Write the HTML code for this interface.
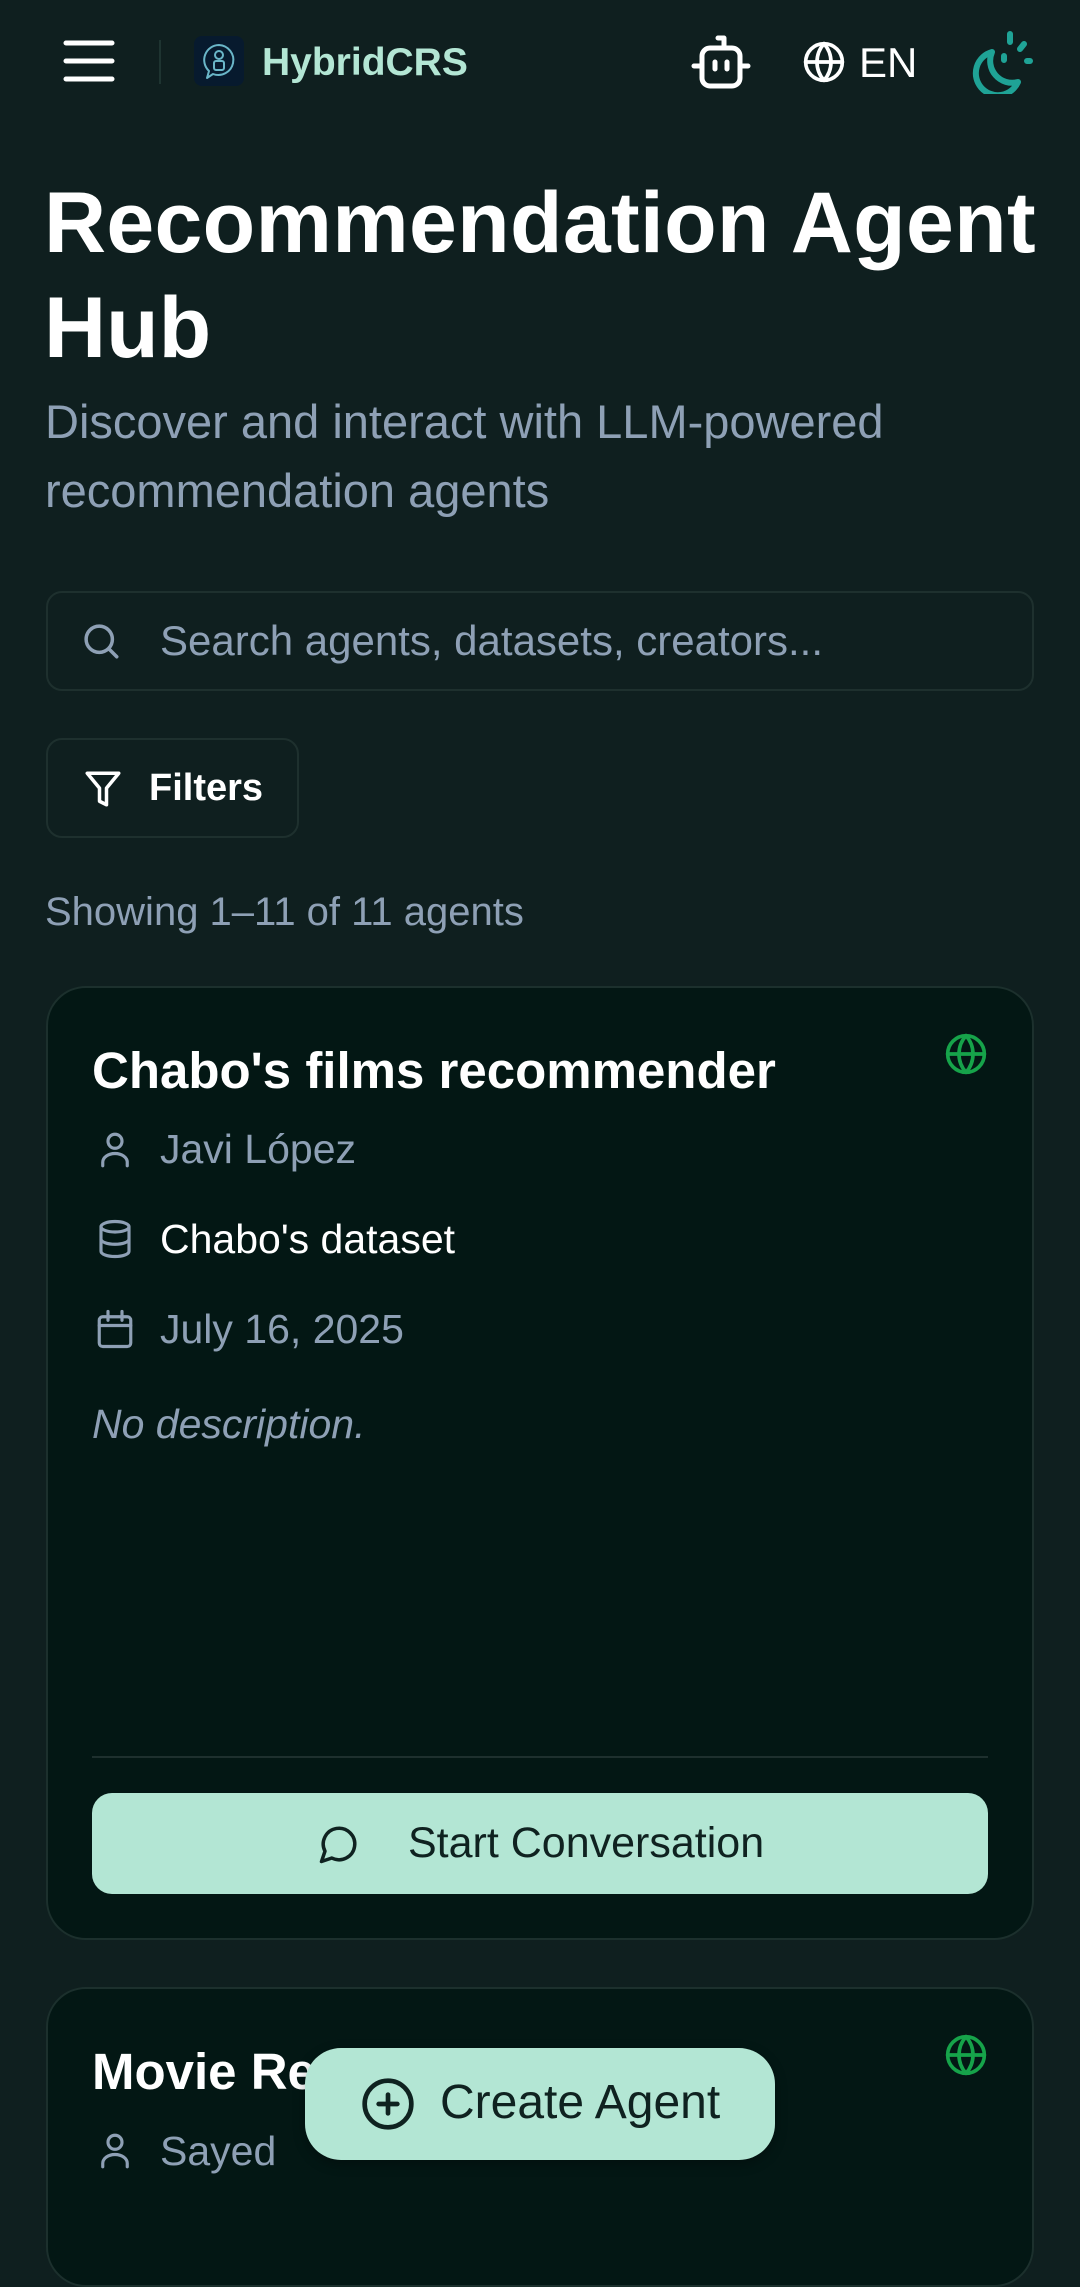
<!DOCTYPE html>
<html><head><meta charset="utf-8"><style>
*{margin:0;padding:0;box-sizing:border-box}
body{width:1080px;height:2194px;overflow:hidden;background:#0f1f1f;font-family:"Liberation Sans",sans-serif;position:relative;color:#fff}
.abs{position:absolute}
svg{position:absolute;fill:none;stroke-linecap:round;stroke-linejoin:round}
.t{white-space:nowrap;position:absolute;line-height:1}
.card{position:absolute;left:46px;width:988px;background:#031714;border:2px solid #1c302d;border-radius:40px}
.gray{color:#8ea0b5}
</style></head><body>
<!-- header -->
<svg style="left:62px;top:38px" width="54" height="46" viewBox="0 0 54 46" stroke="#fff" stroke-width="5"><path d="M4 5h46M4 23h46M4 41h46"/></svg>
<div class="abs" style="left:159px;top:40px;width:2px;height:44px;background:#1e3431"></div>
<div class="abs" style="left:194px;top:36px;width:50px;height:50px;background:#071a2e;border-radius:8px"></div>
<svg style="left:194px;top:36px" width="50" height="50" viewBox="0 0 50 50" stroke="#6ab6c8" stroke-width="2"><path d="M25 9a15 15 0 1 1-6 29l-6 4 2-7a15 15 0 0 1 10-26z"/><circle cx="25" cy="19" r="4"/><rect x="20" y="25" width="10" height="9" rx="2"/></svg>
<div class="t" style="left:262px;top:43px;font-size:39px;font-weight:bold;color:#b3e6d4">HybridCRS</div>
<svg style="left:688px;top:34px" width="64" height="56" viewBox="0 0 64 56" stroke="#fff" stroke-width="5"><path d="M30 4h6v10"/><rect x="14" y="14" width="38" height="38" rx="8"/><path d="M6 32h6M54 32h6M27 28v7M39 28v7"/></svg>
<svg style="left:802px;top:40px" width="44" height="44" viewBox="0 0 24 24" stroke="#fff" stroke-width="2"><circle cx="12" cy="12" r="10"/><path d="M2 12h20M12 2a15 15 0 0 1 0 20M12 2a15 15 0 0 0 0 20"/></svg>
<div class="t" style="left:859px;top:42px;font-size:42px;color:#fff">EN</div>
<svg style="left:966px;top:28px" width="70" height="66" viewBox="0 0 70 66" stroke="#1fa396" stroke-width="6"><path d="M26 24a22 22 0 1 0 26 30a22 22 0 0 1-26-30z"/><path d="M44 6v8M58 16l-4 5M64 33h-3M38 28v4"/></svg>
<!-- title -->
<div class="t" style="left:44px;top:180px;font-size:86px;font-weight:bold;color:#fff;letter-spacing:0.3px">Recommendation Agent</div>
<div class="t" style="left:44px;top:285px;font-size:86px;font-weight:bold;color:#fff">Hub</div>
<div class="t gray" style="left:45px;top:398px;font-size:47px">Discover and interact with LLM-powered</div>
<div class="t gray" style="left:45px;top:467px;font-size:47px">recommendation agents</div>
<!-- search -->
<div class="abs" style="left:46px;top:591px;width:988px;height:100px;border:2px solid #1e302e;border-radius:16px"></div>
<svg style="left:80px;top:620px" width="42" height="42" viewBox="0 0 24 24" stroke="#8ea0b5" stroke-width="2"><circle cx="11" cy="11" r="7.5"/><path d="M21 21l-4.5-4.5"/></svg>
<div class="t gray" style="left:160px;top:620px;font-size:42px">Search agents, datasets, creators...</div>
<!-- filters -->
<div class="abs" style="left:46px;top:738px;width:253px;height:100px;border:2px solid #1e302e;border-radius:16px"></div>
<svg style="left:82px;top:768px" width="42" height="42" viewBox="0 0 24 24" stroke="#fff" stroke-width="2"><path d="M3 3h18l-7 8.5V21l-4-2v-7.5z"/></svg>
<div class="t" style="left:149px;top:769px;font-size:38px;font-weight:bold">Filters</div>
<div class="t gray" style="left:45px;top:892px;font-size:40px">Showing 1–11 of 11 agents</div>
<!-- card 1 -->
<div class="card" style="top:986px;height:954px"></div>
<div class="t" style="left:92px;top:1045px;font-size:51px;font-weight:bold">Chabo's films recommender</div>
<svg style="left:944px;top:1032px" width="44" height="44" viewBox="0 0 24 24" stroke="#16a34a" stroke-width="2"><circle cx="12" cy="12" r="10"/><path d="M2 12h20M12 2a15 15 0 0 1 0 20M12 2a15 15 0 0 0 0 20"/></svg>
<svg style="left:94px;top:1129px" width="42" height="42" viewBox="0 0 24 24" stroke="#8ea0b5" stroke-width="1.8"><circle cx="12" cy="7" r="4"/><path d="M5 21v-2a7 5 0 0 1 14 0v2"/></svg>
<div class="t gray" style="left:160px;top:1129px;font-size:41px">Javi López</div>
<svg style="left:94px;top:1218px" width="42" height="42" viewBox="0 0 24 24" stroke="#8ea0b5" stroke-width="1.8"><ellipse cx="12" cy="5" rx="8" ry="3"/><path d="M4 5v14c0 1.7 3.6 3 8 3s8-1.3 8-3V5M4 12c0 1.7 3.6 3 8 3s8-1.3 8-3"/></svg>
<div class="t" style="left:160px;top:1219px;font-size:41px">Chabo's dataset</div>
<svg style="left:94px;top:1308px" width="42" height="42" viewBox="0 0 24 24" stroke="#8ea0b5" stroke-width="1.8"><rect x="3" y="5" width="18" height="17" rx="2"/><path d="M3 10h18M8 2v5M16 2v5"/></svg>
<div class="t gray" style="left:160px;top:1309px;font-size:41px">July 16, 2025</div>
<div class="t gray" style="left:92px;top:1404px;font-size:41px;font-style:italic">No description.</div>
<div class="abs" style="left:92px;top:1756px;width:896px;height:2px;background:#1e302e"></div>
<div class="abs" style="left:92px;top:1793px;width:896px;height:101px;background:#b3e6d4;border-radius:20px"></div>
<svg style="left:318px;top:1823px" width="42" height="42" viewBox="0 0 24 24" stroke="#0f2220" stroke-width="2"><path d="M7.9 20A9 9 0 1 0 4 16.1L2 22z"/></svg>
<div class="t" style="left:408px;top:1822px;font-size:43px;color:#0f2220">Start Conversation</div>
<!-- card 2 -->
<div class="card" style="top:1987px;height:300px"></div>
<div class="t" style="left:92px;top:2046px;font-size:51px;font-weight:bold">Movie Re</div>
<svg style="left:944px;top:2033px" width="44" height="44" viewBox="0 0 24 24" stroke="#16a34a" stroke-width="2"><circle cx="12" cy="12" r="10"/><path d="M2 12h20M12 2a15 15 0 0 1 0 20M12 2a15 15 0 0 0 0 20"/></svg>
<svg style="left:94px;top:2130px" width="42" height="42" viewBox="0 0 24 24" stroke="#8ea0b5" stroke-width="1.8"><circle cx="12" cy="7" r="4"/><path d="M5 21v-2a7 5 0 0 1 14 0v2"/></svg>
<div class="t gray" style="left:160px;top:2131px;font-size:41px">Sayed</div>
<!-- FAB -->
<div class="abs" style="left:305px;top:2048px;width:470px;height:112px;background:#b3e6d4;border-radius:36px;box-shadow:0 4px 12px rgba(0,0,0,.3)"></div>
<svg style="left:360px;top:2076px" width="56" height="56" viewBox="0 0 24 24" stroke="#0f2220" stroke-width="2"><circle cx="12" cy="12" r="10"/><path d="M12 8v8M8 12h8"/></svg>
<div class="t" style="left:440px;top:2079px;font-size:48px;color:#0f2220">Create Agent</div>
</body></html>
